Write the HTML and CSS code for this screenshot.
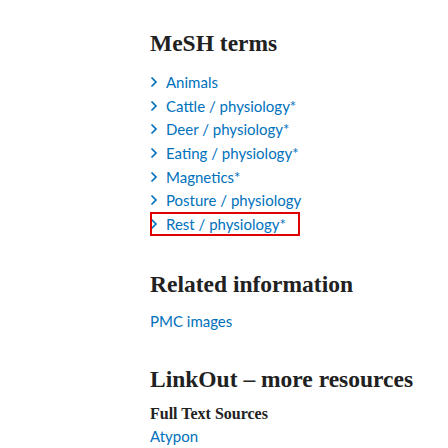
FILE: index.html
```html
<!DOCTYPE html>
<html>
<head>
<meta charset="utf-8">
<link rel="stylesheet" href="styles.css">
</head>
<body>
<div class="page">
  <section class="section mesh">
    <h2 class="heading">MeSH terms</h2>
    <ul class="terms">
      <li class="term"><svg class="chev" viewBox="0 0 8 12"><path d="M1.5 1.5 L6 6 L1.5 10.5"/></svg><span class="link">Animals</span></li>
      <li class="term"><svg class="chev" viewBox="0 0 8 12"><path d="M1.5 1.5 L6 6 L1.5 10.5"/></svg><span class="link">Cattle / physiology*</span></li>
      <li class="term"><svg class="chev" viewBox="0 0 8 12"><path d="M1.5 1.5 L6 6 L1.5 10.5"/></svg><span class="link">Deer / physiology*</span></li>
      <li class="term"><svg class="chev" viewBox="0 0 8 12"><path d="M1.5 1.5 L6 6 L1.5 10.5"/></svg><span class="link">Eating / physiology*</span></li>
      <li class="term"><svg class="chev" viewBox="0 0 8 12"><path d="M1.5 1.5 L6 6 L1.5 10.5"/></svg><span class="link">Magnetics*</span></li>
      <li class="term"><svg class="chev" viewBox="0 0 8 12"><path d="M1.5 1.5 L6 6 L1.5 10.5"/></svg><span class="link">Posture / physiology</span></li>
      <li class="term focused"><svg class="chev" viewBox="0 0 8 12"><path d="M1.5 1.5 L6 6 L1.5 10.5"/></svg><span class="link">Rest / physiology*</span></li>
    </ul>
  </section>
  <section class="section related">
    <h2 class="heading">Related information</h2>
    <div class="link plain">PMC images</div>
  </section>
  <section class="section linkout">
    <h2 class="heading tight">LinkOut – more resources</h2>
    <h3 class="subheading">Full Text Sources</h3>
    <div class="link plain">Atypon</div>
  </section>
</div>
</body>
</html>
```
FILE: styles.css
```css
html, body {
  margin: 0;
  padding: 0;
  background: #ffffff;
}
.page {
  padding: 29px 0 0 150px;
}
.section {
  margin: 0;
}
.heading {
  font-family: "Liberation Serif", "DejaVu Serif", serif;
  font-weight: bold;
  font-size: 23.5px;
  line-height: 28px;
  color: #212121;
  margin: 0 0 13px 0;
  white-space: nowrap;
}
.heading.tight {
  margin-bottom: 10px;
}
.terms {
  list-style: none;
  margin: 0;
  padding: 0;
}
.term {
  display: flex;
  align-items: center;
  height: 23.7px;
  white-space: nowrap;
}
.chev {
  width: 8px;
  height: 12px;
  margin-right: 8px;
  flex: none;
}
.chev path {
  fill: none;
  stroke: #0071bc;
  stroke-width: 1.7;
}
.link {
  color: #0071bc;
  font-family: Lato, "Open Sans", sans-serif;
  font-size: 15px;
}
.focused {
  outline: 2px solid #e00000;
  outline-offset: -2px;
  width: 150px;
}
.related {
  margin-top: 34px;
}
.related .heading {
  margin-bottom: 12px;
}
.plain {
  line-height: 22px;
}
.linkout {
  margin-top: 33px;
}
.subheading {
  font-family: "Liberation Serif", "DejaVu Serif", serif;
  font-weight: bold;
  font-size: 16px;
  color: #212121;
  margin: 0;
  line-height: 22px;
}
```
